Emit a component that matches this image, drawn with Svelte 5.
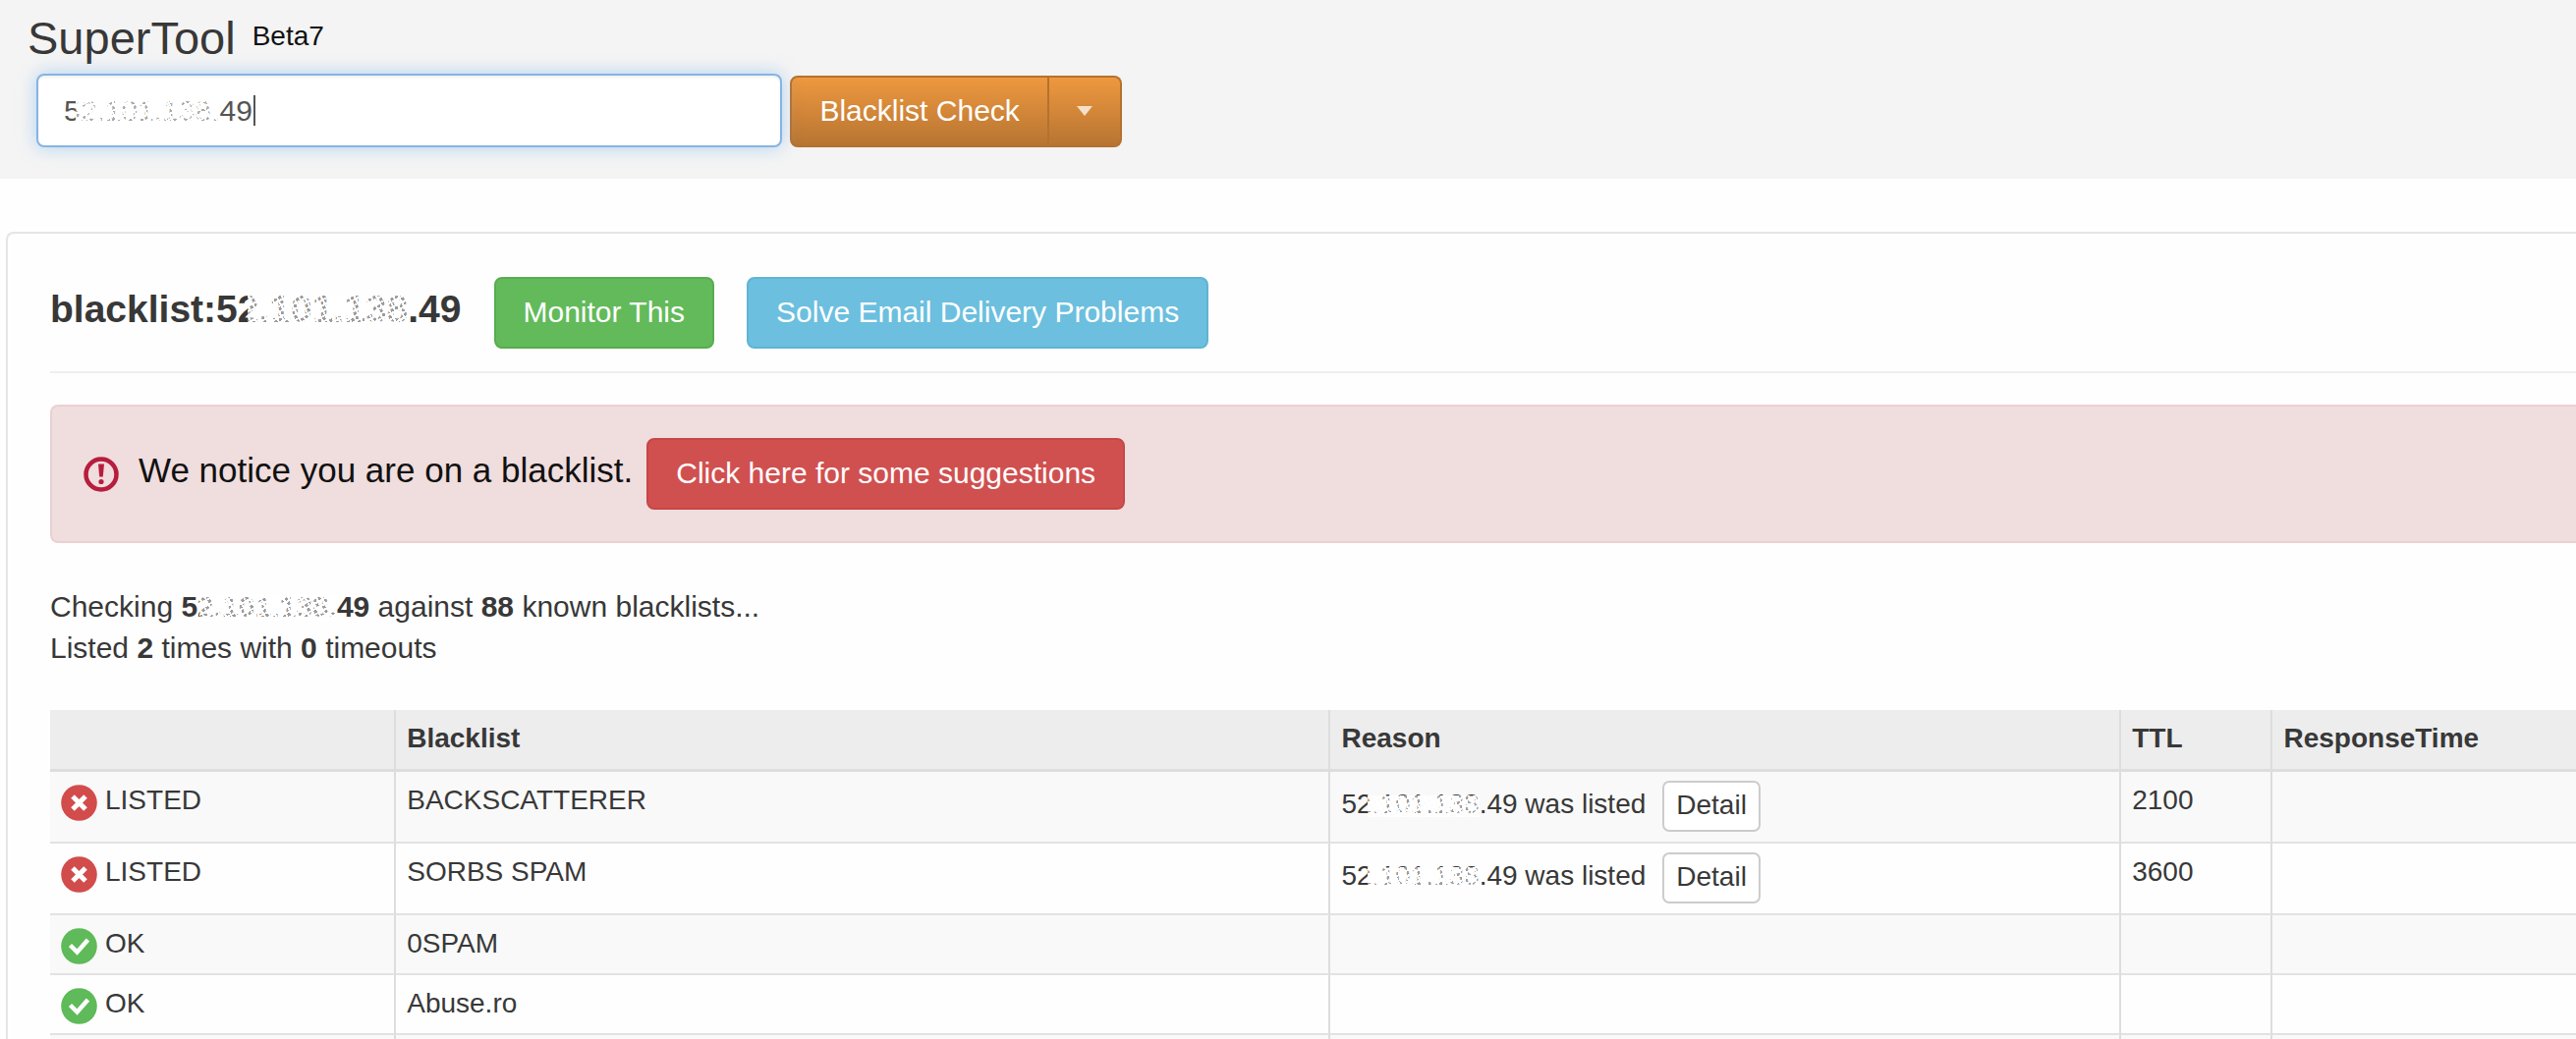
<script>
  const ip = { start: '52', middle: '.101.138', end: '.49' };
  let query = $state('52.101.138.49');

  const rows = [
    { listed: true, name: 'BACKSCATTERER', ttl: '2100' },
    { listed: true, name: 'SORBS SPAM', ttl: '3600' },
    { listed: false, name: '0SPAM', ttl: '' },
    { listed: false, name: 'Abuse.ro', ttl: '' },
    null
  ];
</script>

<div class="page">
  <header>
    <div class="title">
      <h1>SuperTool</h1>
      <span class="beta">Beta7</span>
    </div>
    <form class="search" onsubmit={(e) => e.preventDefault()}>
      <div class="field">
        <input type="text" aria-label="Lookup" bind:value={query} />
        <span class="veil"></span>
        <span class="caret"></span>
      </div>
      <div class="split">
        <button class="btn main" type="submit">Blacklist Check</button>
        <button class="btn more" type="button" aria-label="More tools"><span class="arrow"></span></button>
      </div>
    </form>
  </header>

  <main>
    <div class="head">
      <h2>blacklist:5<span class="masked low">2.101.138</span>.49</h2>
      <button class="btn green" type="button">Monitor This</button>
      <button class="btn blue" type="button">Solve Email Delivery Problems</button>
    </div>

    <div class="alert" role="alert">
      <svg class="warn" viewBox="0 0 36 36" aria-hidden="true">
        <circle cx="18" cy="18" r="15.500" fill="none" stroke="#b71d3d" stroke-width="4.500" />
        <path d="M15 7.500h6l-1.200 13h-3.600z" fill="#b71d3d" />
        <circle cx="18" cy="25.500" r="2.600" fill="#b71d3d" />
      </svg>
      <span class="notice">We notice you are on a blacklist.</span>
      <button class="btn red" type="button">Click here for some suggestions</button>
    </div>

    <p class="summary">
      Checking <b>5<span class="masked">2.101.138.</span>49</b> against <b>88</b> known blacklists...<br />
      Listed <b>2</b> times with <b>0</b> timeouts
    </p>

    <table>
      <colgroup>
        <col class="c-status" /><col class="c-name" /><col class="c-reason" /><col class="c-ttl" /><col />
      </colgroup>
      <thead>
        <tr>
          <th aria-label="Status"></th>
          <th>Blacklist</th>
          <th>Reason</th>
          <th>TTL</th>
          <th>ResponseTime</th>
        </tr>
      </thead>
      <tbody>
        {#each rows as row}
          <tr>
            <td>
              {#if row}
                <div class="status">
                  <svg viewBox="0 0 37 37" aria-hidden="true">
                    <circle cx="18.500" cy="18.500" r="18.300" fill={row.listed ? '#d24c4c' : '#5fba59'} />
                    {#if row.listed}
                      <path d="M12 12l13 13M25 12l-13 13" stroke="#fff" stroke-width="5" fill="none" />
                    {:else}
                      <path d="M9.500 17.500l7 7L27.500 12" stroke="#fff" stroke-width="4.500" fill="none" />
                    {/if}
                  </svg>
                  <span>{row.listed ? 'LISTED' : 'OK'}</span>
                </div>
              {/if}
            </td>
            <td>{row ? row.name : ''}</td>
            <td>
              {#if row && row.listed}
                <div class="reason">
                  <span class="text">{ip.start}<span class="masked dim">{ip.middle}</span>{ip.end} was listed</span>
                  <button class="detail" type="button">Detail</button>
                </div>
              {/if}
            </td>
            <td>{row ? row.ttl : ''}</td>
            <td></td>
          </tr>
        {/each}
      </tbody>
    </table>
  </main>
</div>

<style>
  :global(body) {
    margin: 0;
    background: #fefefe;
  }
  .page {
    height: 100vh;
    overflow: hidden;
    font-family: 'Liberation Sans', Arial, sans-serif;
    font-size: 30px;
    line-height: 42px;
    color: #383838;
  }
  .page * {
    box-sizing: border-box;
  }
  button,
  input {
    font: inherit;
    margin: 0;
  }
  header {
    background: #f4f4f4;
    padding: 12px 28px 32px;
  }
  .title {
    display: flex;
    gap: 17px;
  }
  h1 {
    margin: 0;
    font-size: 47px;
    line-height: 54px;
    font-weight: 400;
  }
  .beta {
    padding-top: 8px;
    font-size: 28px;
    line-height: 34px;
    color: #111;
  }
  .search {
    display: flex;
    align-items: flex-end;
    gap: 8px;
    padding: 9px 0 0 9px;
  }
  .field {
    position: relative;
    width: 29.7%;
  }
  .field input {
    display: block;
    width: 100%;
    height: 75px;
    padding: 0 26px;
    border: 2px solid #86b4e4;
    border-radius: 8px;
    outline: none;
    background: #fff;
    color: #555;
    box-shadow: 0 0 18px rgba(110, 175, 240, 0.5), inset 0 2px 3px rgba(0, 0, 0, 0.06);
  }
  .veil,
  .masked::after {
    position: absolute;
    background-image:
      repeating-linear-gradient(62deg, #fff 0 2px, transparent 2px 5px),
      repeating-linear-gradient(-28deg, #fff 0 2px, transparent 2px 5px),
      linear-gradient(rgba(255, 255, 255, 0.5), rgba(255, 255, 255, 0.5));
  }
  .veil {
    left: 40px;
    top: 20px;
    width: 144px;
    height: 36px;
  }
  .caret {
    position: absolute;
    left: 221px;
    top: 22px;
    width: 2px;
    height: 31px;
    background: #555;
  }
  .masked {
    position: relative;
  }
  .masked::after {
    content: '';
    inset: 4px 0 2px 2px;
  }
  .masked.low::after {
    top: 8px;
    left: 10px;
  }
  .masked.dim::after {
    top: 7px;
    left: -5px;
  }
  .split {
    display: flex;
  }
  .btn {
    height: 73px;
    padding: 0 28px 2px;
    border: 2px solid;
    border-radius: 8px;
    color: #fff;
    white-space: nowrap;
    cursor: pointer;
  }
  .main,
  .more {
    background: linear-gradient(#ee983f, #b77532);
    border-color: #b5712f;
  }
  .main {
    border-radius: 8px 0 0 8px;
  }
  .more {
    display: flex;
    align-items: center;
    border-left: 0;
    border-radius: 0 8px 8px 0;
  }
  .arrow {
    border: 8px solid transparent;
    border-top: 10px solid #f7e0c8;
    border-bottom: 0;
  }
  .green {
    background: #62ba5a;
    border-color: #57ad50;
  }
  .blue {
    background: #6cbfde;
    border-color: #60b4d4;
  }
  .red {
    background: #d05050;
    border-color: #c74648;
  }
  main {
    margin: 54px 0 0 6px;
    padding: 44px 0 0 43px;
    border: 2px solid #e5e5e5;
    border-right: 0;
    border-bottom: 0;
    border-top-left-radius: 8px;
  }
  .head {
    display: flex;
    align-items: baseline;
    gap: 33px;
    padding-bottom: 23px;
    border-bottom: 2px solid #eee;
  }
  h2 {
    margin: 0;
    font-size: 39px;
    line-height: 42px;
  }
  .alert {
    display: flex;
    align-items: center;
    margin-top: 32px;
    padding: 32px;
    border: 2px solid #ebd0d3;
    border-right: 0;
    border-radius: 8px 0 0 8px;
    background: #f0dddd;
  }
  .warn {
    width: 36px;
    height: 36px;
  }
  .notice {
    padding: 0 14px 8px 20px;
    font-size: 35px;
    color: #111;
  }
  .summary {
    margin: 44px 0 42px;
  }
  table {
    width: 100%;
    table-layout: fixed;
    border-collapse: separate;
    border-spacing: 0;
    font-size: 28px;
    line-height: 40px;
  }
  .c-status {
    width: 13.7%;
  }
  .c-name {
    width: 37%;
  }
  .c-reason {
    width: 31.3%;
  }
  .c-ttl {
    width: 6%;
  }
  th,
  td {
    padding: 9px 10px 10px 11px;
    border-right: 2px solid #ddd;
    border-bottom: 2px solid #e2e2e2;
    text-align: left;
    vertical-align: top;
  }
  th:last-child,
  td:last-child {
    border-right: 0;
  }
  th {
    padding-bottom: 11px;
    border-bottom: 3px solid #ddd;
    background: #ededed;
  }
  tbody tr:nth-child(odd) {
    background: #f9f9f9;
  }
  .status {
    display: flex;
    gap: 8px;
  }
  .status svg {
    width: 37px;
    height: 37px;
    margin-top: 4px;
    margin-bottom: -1px;
  }
  .reason {
    display: flex;
    align-items: center;
    gap: 17px;
    height: 52px;
  }
  .reason .text {
    padding-bottom: 5px;
  }
  .detail {
    height: 52px;
    padding: 0 12px 2px;
    border: 2px solid #ccc;
    border-radius: 7px;
    background: #fff;
    color: #383838;
    cursor: pointer;
  }
</style>
